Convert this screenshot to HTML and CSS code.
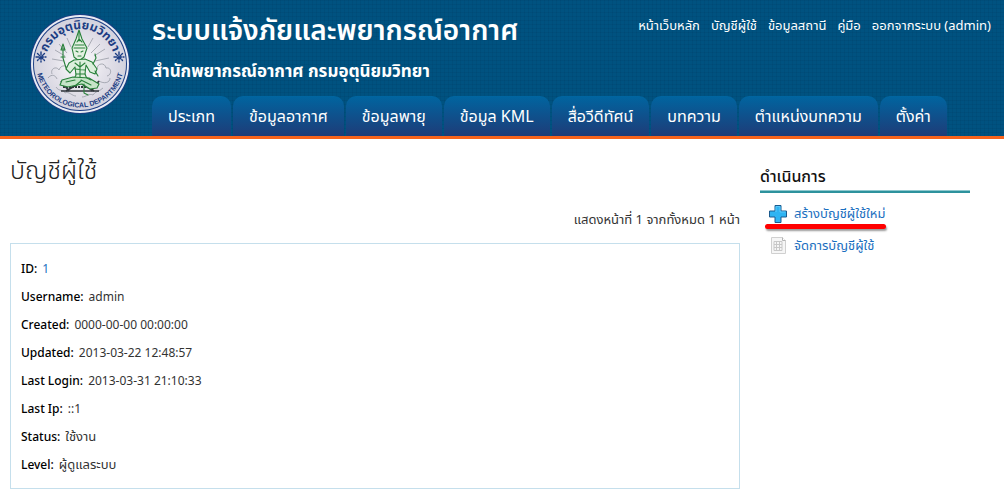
FILE: index.html
```
<!DOCTYPE html>
<html lang="th">
<head>
    <meta charset="UTF-8">
    <meta name="viewport" content="width=device-width, initial-scale=1.0">
    <title>บัญชีผู้ใช้</title>
    <link rel="stylesheet" href="styles.css">
</head>
<body>
    <header class="header">
        <a class="logo" href="#">
            <svg viewBox="0 0 100 100" role="img" aria-label="Meteorological Department">
                <defs>
                    <radialGradient id="sealBg">
                        <stop offset="0" stop-color="#ffffff"/>
                        <stop offset="0.55" stop-color="#e4e2ea"/>
                        <stop offset="1" stop-color="#d3d2de"/>
                    </radialGradient>
                    <path id="arcTop" d="M15 50 A35 35 0 0 1 85 50"/>
                    <path id="arcBottom" d="M7 42 A43.700 43.700 0 1 0 93 42"/>
                </defs>
                <circle cx="50" cy="50" r="50" fill="#1c3d83"/>
                <circle cx="50" cy="50" r="49" fill="#e9ebf3"/>
                <circle cx="50" cy="50" r="47" fill="#1c3d83"/>
                <circle cx="50" cy="50" r="46" fill="url(#sealBg)"/>
                <text class="seal-th"><textPath href="#arcTop" startOffset="50%" text-anchor="middle">กรมอุตุนิยมวิทยา</textPath></text>
                <text class="seal-en"><textPath href="#arcBottom" startOffset="50%" text-anchor="middle">METEOROLOGICAL DEPARTMENT</textPath></text>
                <!-- side stars -->
                <g stroke="#1c3d83" stroke-width="1.4" stroke-linecap="round" stroke-dasharray="3 1.5">
                    <path d="M11 38v10M6 43h10M7.500 39.500l7 7M14.500 39.500l-7 7"/>
                    <path d="M89 38v10M84 43h10M85.500 39.500l7 7M92.500 39.500l-7 7"/>
                </g>
                <!-- rays and clouds -->
                <g fill="none" stroke="#8e929c" stroke-width="0.700">
                    <path d="M25 36l10 6M22 45l12 2M29 30l8 9M70 30l-9 9M75 35l-11 7M79 44l-14 3M37 24l4 9M63 24l-5 9"/>
                    <path d="M22 60c-2-6 5-8 7-4 2-6 9-5 9 0M18 64c4-5 8-2 9 1M77 62c5-1 5-9-1-8-1-6-9-5-9 1M69 67c5 3 11 2 11-3M26 73c3 5 8 2 9 6 4-2 7 3 11 3M73 74c-4 4-8 3-10 7-4-2-7 2-11 2"/>
                </g>
                <!-- throne -->
                <g stroke="#30363b" fill="none">
                    <path d="M32 69h36M31 77h38" stroke-width="1.500"/>
                    <path d="M31 67l8 10M69 67l-8 10M36 77l12-7M64 77l-12-7" stroke-width="1.800"/>
                    <path d="M33 73h34" stroke-width="2" stroke-dasharray="2 1"/>
                </g>
                <!-- seated deity -->
                <g fill="none" stroke="#278039" stroke-width="1.100" stroke-linecap="round" stroke-linejoin="round">
                    <path d="M49 16l-3 9-4 9 2 9 5 4 5-4 3-9-5-9z" fill="#e4f1e2"/>
                    <path d="M45 31h9M44 34h11M49 18v9M47 28l2-3 3 3"/>
                    <path d="M46 37l2 1M51 38l2-1M48 42h3"/>
                    <path d="M44 46l-5 3-3 6 4 4 5-6 1 8-2 4h13l-2-5 1-9 4 7 5 2 2-5-5-7-7-3z" fill="#dcefdc"/>
                    <path d="M45 49l5 4 5-4M45 55l10 1M46 60h9M50 48v15"/>
                    <path d="M36 54l-3-10v-10M31 43h4M31 36l2-6 2 6zM63 50l3-6-1-4M65 57l3 5"/>
                    <path d="M43 63l-11 3-2 5 8 2 14-3 8 5 7-1 2-4-10-6z" fill="#c6e4c8"/>
                    <path d="M36 68l9-2M51 66l10 5M45 72l6-5M54 70v9l4 2M57 64l4 2"/>
                </g>
            </svg>
        </a>
        <div class="brand">
            <h1>ระบบแจ้งภัยและพยากรณ์อากาศ</h1>
            <p>สำนักพยากรณ์อากาศ กรมอุตุนิยมวิทยา</p>
        </div>
        <nav class="top-links">
            <a href="#">หน้าเว็บหลัก</a>
            <a href="#">บัญชีผู้ใช้</a>
            <a href="#">ข้อมูลสถานี</a>
            <a href="#">คู่มือ</a>
            <a href="#">ออกจากระบบ (admin)</a>
        </nav>
        <nav class="tabs">
            <a href="#">ประเภท</a>
            <a href="#">ข้อมูลอากาศ</a>
            <a href="#">ข้อมูลพายุ</a>
            <a href="#">ข้อมูล KML</a>
            <a href="#">สื่อวีดีทัศน์</a>
            <a href="#">บทความ</a>
            <a href="#">ตำแหน่งบทความ</a>
            <a href="#">ตั้งค่า</a>
        </nav>
    </header>

    <div class="container">
        <main>
            <h2>บัญชีผู้ใช้</h2>
            <p class="summary">แสดงหน้าที่ 1 จากทั้งหมด 1 หน้า</p>
            <dl class="view">
                <div><dt>ID:</dt><dd><a href="#">1</a></dd></div>
                <div><dt>Username:</dt><dd>admin</dd></div>
                <div><dt>Created:</dt><dd>0000-00-00 00:00:00</dd></div>
                <div><dt>Updated:</dt><dd>2013-03-22 12:48:57</dd></div>
                <div><dt>Last Login:</dt><dd>2013-03-31 21:10:33</dd></div>
                <div><dt>Last Ip:</dt><dd>::1</dd></div>
                <div><dt>Status:</dt><dd class="thai">ใช้งาน</dd></div>
                <div><dt>Level:</dt><dd class="thai">ผู้ดูแลระบบ</dd></div>
            </dl>
        </main>
        <aside class="sidebar">
            <h3>ดำเนินการ</h3>
            <ul>
                <li class="marked">
                    <a href="#">
                        <svg width="20" height="20" viewBox="0 0 20 20">
                            <path d="M7 1.500h6V7h5.500v6H13v5.500H7V13H1.500V7H7z" fill="#2fb4f2" stroke="#1b5b8e" stroke-linejoin="round"/>
                            <path d="M8 8V2.500h4V8h5.500" fill="none" stroke="#5cc8fa"/>
                        </svg>
                        สร้างบัญชีผู้ใช้ใหม่
                    </a>
                </li>
                <li>
                    <a href="#">
                        <svg width="20" height="20" viewBox="0 0 20 20">
                            <path d="M3.500 1.500h11l3 3v13h-14z" fill="#f6f6f6" stroke="#d0d0d0"/>
                            <path d="M14.500 1.500v3h3" fill="#fff" stroke="#b4b4b4"/>
                            <path d="M6 5.500h8v9H6zM6 8.500h8M6 11.500h8M8.500 5v9M11.500 5v9" fill="none" stroke="#c8c8c8"/>
                        </svg>
                        จัดการบัญชีผู้ใช้
                    </a>
                </li>
            </ul>
        </aside>
    </div>
</body>
</html>
```
FILE: styles.css
```
* {
    box-sizing: border-box;
}
body {
    margin: 0;
    background: #fff;
    color: #333;
    font-family: "Noto Sans Thai", "Noto Sans", sans-serif;
    font-size: 13px;
    line-height: 28px;
}
h1, h2, h3, p, ul, dl, dd {
    margin: 0;
    padding: 0;
}
a {
    color: #1b6fc0;
    text-decoration: none;
}
.header {
    display: grid;
    grid-template-columns: 152px auto 1fr;
    grid-template-rows: 96px 40px;
    border-bottom: 3px solid #f9641c;
    background-color: #005280;
    background-image:
        repeating-linear-gradient(90deg, rgba(0, 30, 60, 0.08) 0 1px, transparent 1px 4px),
        repeating-linear-gradient(rgba(0, 30, 60, 0.08) 0 1px, transparent 1px 4px);
    color: #fff;
}
.logo {
    grid-row: 1 / 3;
    padding: 14px 0 0 30px;
}
.logo svg {
    display: block;
    width: 100px;
    height: 100px;
}
.seal-th {
    font-size: 12px;
    font-weight: bold;
    fill: #1c3d83;
}
.seal-en {
    font-family: "Liberation Sans", Arial, sans-serif;
    font-size: 7px;
    font-weight: bold;
    fill: #1c3d83;
}
.brand h1 {
    padding-top: 10px;
    font-size: 28px;
    font-weight: 600;
    line-height: 44px;
}
.brand p {
    padding-top: 2px;
    font-size: 17px;
    font-weight: bold;
    line-height: 32px;
}
.top-links {
    display: flex;
    justify-content: flex-end;
    gap: 11px;
    padding: 12px 13px 0 0;
}
.top-links a {
    color: #fff;
    white-space: nowrap;
}
.tabs {
    grid-column: 2 / 4;
    display: flex;
    gap: 2px;
}
.tabs a {
    padding: 2px 16px 0;
    border-radius: 10px 10px 0 0;
    background: linear-gradient(#0065a0, #1e3c78);
    color: #fff;
    font-size: 16px;
    line-height: 38px;
    white-space: nowrap;
}
.container {
    display: grid;
    grid-template-columns: minmax(0, 1fr) 210px;
    gap: 20px;
    padding: 12px 34px 9px 10px;
}
h2 {
    color: #222;
    font-size: 25px;
    font-weight: 300;
    line-height: 40px;
}
.summary {
    margin: 15px 0 9px;
    text-align: right;
}
.view {
    padding: 11px 10px 9px;
    border: 1px solid #c5dfec;
    font-size: 12px;
}
.view div {
    display: flex;
    gap: 5px;
}
dt {
    color: #000;
    font-weight: 500;
}
.thai {
    font-size: 13px;
}
.sidebar h3 {
    margin-top: 12px;
    border-bottom: 2px solid #2d929d;
    box-shadow: inset 0 -1px #8fc9cf;
    color: #111;
    font-size: 16px;
    font-weight: 500;
    line-height: 28px;
}
.sidebar ul {
    padding: 5px 0 0 8px;
    list-style: none;
}
.sidebar li {
    position: relative;
    padding: 2px 0;
}
.sidebar a {
    display: flex;
    align-items: center;
    gap: 6px;
}
.marked::after {
    content: "";
    position: absolute;
    bottom: 1px;
    left: -3px;
    width: 121px;
    height: 5px;
    border-radius: 3px;
    background: #f00;
    box-shadow: 1px 2px 2px rgba(0, 0, 0, 0.4);
}
```
